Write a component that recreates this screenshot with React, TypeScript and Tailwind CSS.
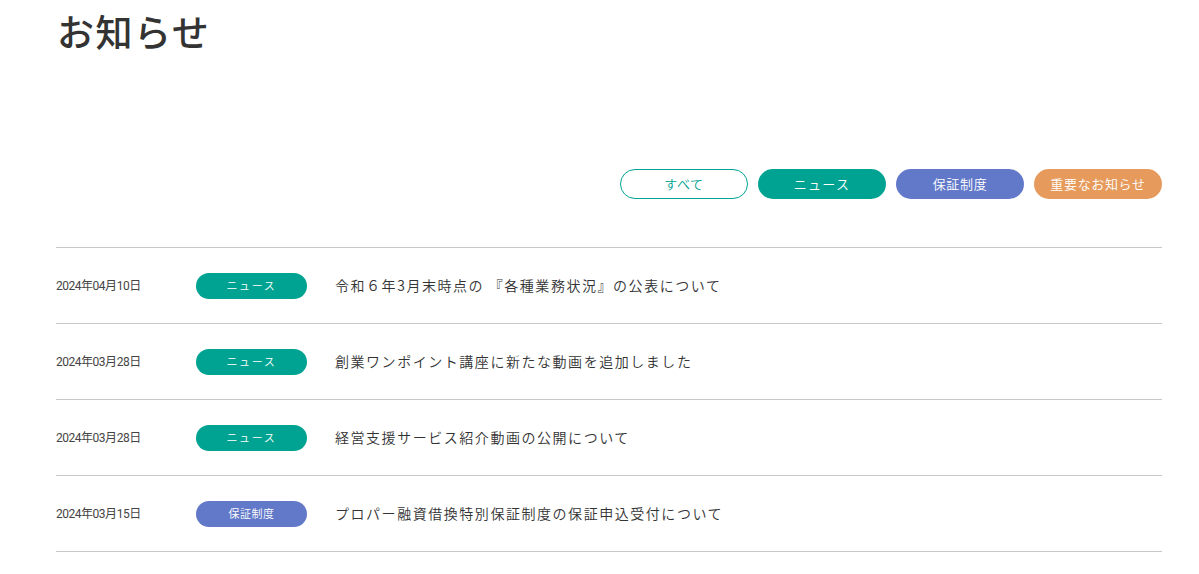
import React from "react";

type Cat = "news" | "guarantee";

const items: { date: string; cat: Cat; title: string }[] = [
  { date: "2024年04月10日", cat: "news", title: "令和６年3月末時点の 『各種業務状況』の公表について" },
  { date: "2024年03月28日", cat: "news", title: "創業ワンポイント講座に新たな動画を追加しました" },
  { date: "2024年03月28日", cat: "news", title: "経営支援サービス紹介動画の公開について" },
  { date: "2024年03月15日", cat: "guarantee", title: "プロパー融資借換特別保証制度の保証申込受付について" },
];

const font = { fontFamily: '"Noto Sans CJK JP", "Noto Sans", sans-serif' };

export default function App() {
  return (
    <div className="bg-white text-[#333] w-[1199px] h-[574px] overflow-hidden" style={font}>
      <div className="ml-[56px] w-[1106px]">
        <h1 className="pl-[1px] pt-[7px] text-[37px] leading-[48px] font-medium tracking-[0.04em] text-[#333]">
          お知らせ
        </h1>
        <div className="mt-[114px] flex justify-end gap-[10px]">
          <button className="w-[128px] h-[30px] rounded-full border border-[#00a391] text-[#00a391] bg-white text-[13px] font-[350] tracking-[0.05em] flex items-center justify-center">
            すべて
          </button>
          <button className="w-[128px] h-[30px] rounded-full bg-[#00a391] text-white text-[13px] font-[350] tracking-[0.1em] flex items-center justify-center">
            ニュース
          </button>
          <button className="w-[128px] h-[30px] rounded-full bg-[#6279c9] text-white text-[13px] font-[350] tracking-[0.05em] flex items-center justify-center">
            保証制度
          </button>
          <button className="w-[128px] h-[30px] rounded-full bg-[#e69b5d] text-white text-[13px] font-[350] tracking-[0.05em] flex items-center justify-center">
            重要なお知らせ
          </button>
        </div>
        <ul className="mt-[48px] border-b border-[#c8c8c8]">
          {items.map((it, i) => (
            <li key={i} className="h-[76px] border-t border-[#c8c8c8] flex items-center">
              <span
                className="w-[140px] text-[12px] tracking-[-0.04em] text-[#444]"
                style={{ fontFamily: 'Roboto, "Noto Sans CJK JP", sans-serif' }}
              >
                {it.date}
              </span>
              <span
                className={
                  it.cat === "news"
                    ? "w-[111px] h-[26px] rounded-full bg-[#00a391] text-white text-[11px] font-[350] tracking-[0.15em] flex items-center justify-center"
                    : "w-[111px] h-[26px] rounded-full bg-[#6279c9] text-white text-[11px] font-[350] tracking-[0.05em] flex items-center justify-center"
                }
              >
                {it.cat === "news" ? "ニュース" : "保証制度"}
              </span>
              <span className="ml-[28px] text-[14px] font-[350] tracking-[0.11em] text-[#333]">{it.title}</span>
            </li>
          ))}
        </ul>
      </div>
    </div>
  );
}
